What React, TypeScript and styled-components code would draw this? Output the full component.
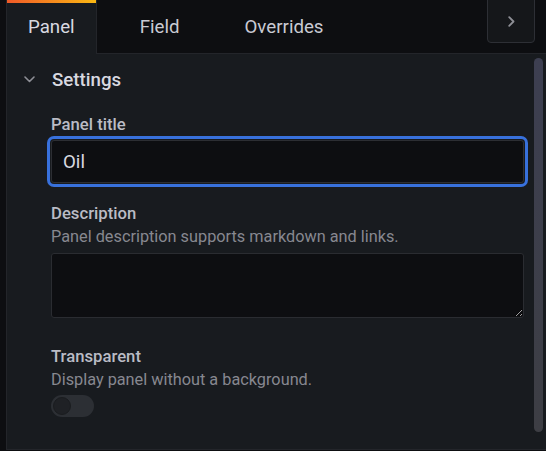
import React, { useState } from "react";
import styled, { createGlobalStyle, css } from "styled-components";

const GlobalStyle = createGlobalStyle`
  html, body {
    margin: 0;
    padding: 0;
    background: #0d0e11;
    color-scheme: dark;
  }
  body {
    font-family: Roboto, "Liberation Sans", Arial, sans-serif;
    -webkit-font-smoothing: antialiased;
  }
`;

const Wrapper = styled.div`
  display: flex;
  height: 450px;
  padding-left: 6px;
  overflow: hidden;
`;

const Pane = styled.div`
  display: flex;
  flex-direction: column;
  flex: 1;
  min-width: 0;
`;

const TabBar = styled.div`
  display: flex;
  align-items: stretch;
  gap: 21px;
  height: 53px;
  flex-shrink: 0;
  border-bottom: 1px solid #23252a;
  background: #0d0e11;
`;

const Tab = styled.div<{ active?: boolean }>`
  position: relative;
  display: flex;
  align-items: center;
  padding: 0 21px;
  border-left: 1px solid transparent;
  border-right: 1px solid transparent;
  font-size: 18.7px;
  color: #c9cad3;
  cursor: pointer;

  ${({ active }) =>
    active &&
    css`
      margin-bottom: -1px;
      background: #181b1f;
      border-color: #23252a;
      color: #d8d9e0;

      &::before {
        content: "";
        position: absolute;
        top: 0;
        left: 0;
        right: 0;
        height: 3px;
        background: linear-gradient(90deg, #f05a28 0%, #fbb813 100%);
      }
    `}
`;

const CollapseButton = styled.button`
  align-self: flex-start;
  display: flex;
  align-items: center;
  justify-content: center;
  margin: -4px 11px 0 auto;
  width: 48px;
  height: 47px;
  padding: 4px 0 0;
  border: 1px solid #2d2f35;
  border-radius: 4px;
  background: #15171a;
  color: #8e8f96;
  cursor: pointer;
`;

const Content = styled.div`
  position: relative;
  flex: 1;
  background: #181b1f;
  border-left: 1px solid #23252a;
  border-bottom: 1px solid #23252a;
`;

const Scrollbar = styled.div`
  position: absolute;
  top: 4px;
  bottom: 17px;
  right: 3px;
  width: 9px;
  border-radius: 5px;
  background: linear-gradient(180deg, #3d3f51 0%, #3d3e44 100%);
`;

const SectionHeader = styled.div`
  display: flex;
  align-items: center;
  gap: 17px;
  height: 51px;
  padding-left: 17px;
  font-size: 18.7px;
  font-weight: 500;
  color: #d8d9e0;
`;

const Fields = styled.div`
  display: flex;
  flex-direction: column;
  padding: 10px 22px 0 44px;
`;

const Field = styled.div<{ gapAfter: number }>`
  display: flex;
  flex-direction: column;
  margin-bottom: ${({ gapAfter }) => gapAfter}px;
`;

const Label = styled.div`
  font-size: 16.7px;
  line-height: 20px;
  font-weight: 500;
  color: #babcc5;
`;

const Hint = styled.div`
  margin-top: 3px;
  font-size: 16.3px;
  line-height: 20px;
  color: #878890;
`;

const Input = styled.input`
  box-sizing: border-box;
  margin-top: 5px;
  height: 43px;
  width: 100%;
  padding: 0 11px;
  border: 1px solid #2c2e33;
  border-radius: 3px;
  background: #0d0e11;
  color: #d8d9e0;
  font-family: inherit;
  font-size: 18.7px;
  outline: none;
  box-shadow: 0 0 0 1px #181b1f, 0 0 0 4px #3871dc;
`;

const TextArea = styled.textarea`
  display: block;
  box-sizing: border-box;
  margin-top: 6px;
  height: 65px;
  width: 100%;
  padding: 6px 11px;
  border: 1px solid #2a2c31;
  border-radius: 3px;
  background: #0d0e11;
  color: #d8d9e0;
  font-family: inherit;
  font-size: 18.7px;
  resize: vertical;
  outline: none;
`;

const SwitchTrack = styled.button<{ on: boolean }>`
  position: relative;
  margin-top: 5px;
  width: 43px;
  height: 22px;
  padding: 0;
  border: none;
  border-radius: 11px;
  background: ${({ on }) => (on ? "#3871dc" : "#2c2f34")};
  cursor: pointer;

  &::after {
    content: "";
    position: absolute;
    top: 2px;
    left: ${({ on }) => (on ? "23px" : "2px")};
    width: 18px;
    height: 18px;
    border-radius: 50%;
    box-sizing: border-box;
    background: #1f2125;
    border: 1px solid #1a1c1f;
  }
`;

const ChevronDown = () => (
  <svg width="11" height="7" viewBox="0 0 11 7" fill="none">
    <path
      d="M1 1l4.5 4.5L10 1"
      stroke="#8e8f96"
      strokeWidth="1.6"
      strokeLinecap="round"
      strokeLinejoin="round"
    />
  </svg>
);

const ChevronRight = () => (
  <svg width="7" height="11" viewBox="0 0 7 11" fill="none">
    <path
      d="M1.2 1.2l4.3 4.3-4.3 4.3"
      stroke="#8e8f96"
      strokeWidth="1.8"
      strokeLinecap="round"
      strokeLinejoin="round"
    />
  </svg>
);

const tabs = ["Panel", "Field", "Overrides"];

const App = () => {
  const [title, setTitle] = useState("Oil");
  const [transparent, setTransparent] = useState(false);

  return (
    <>
      <GlobalStyle />
      <Wrapper>
        <Pane>
          <TabBar>
            {tabs.map((t, i) => (
              <Tab key={t} active={i === 0}>
                {t}
              </Tab>
            ))}
            <CollapseButton>
              <ChevronRight />
            </CollapseButton>
          </TabBar>
          <Content>
            <SectionHeader>
              <ChevronDown />
              Settings
            </SectionHeader>
            <Fields>
              <Field gapAfter={21}>
                <Label>Panel title</Label>
                <Input value={title} onChange={(e) => setTitle(e.target.value)} />
              </Field>
              <Field gapAfter={29}>
                <Label>Description</Label>
                <Hint>Panel description supports markdown and links.</Hint>
                <TextArea />
              </Field>
              <Field gapAfter={0}>
                <Label>Transparent</Label>
                <Hint>Display panel without a background.</Hint>
                <SwitchTrack
                  on={transparent}
                  onClick={() => setTransparent(!transparent)}
                />
              </Field>
            </Fields>
            <Scrollbar />
          </Content>
        </Pane>
      </Wrapper>
    </>
  );
};

export default App;
